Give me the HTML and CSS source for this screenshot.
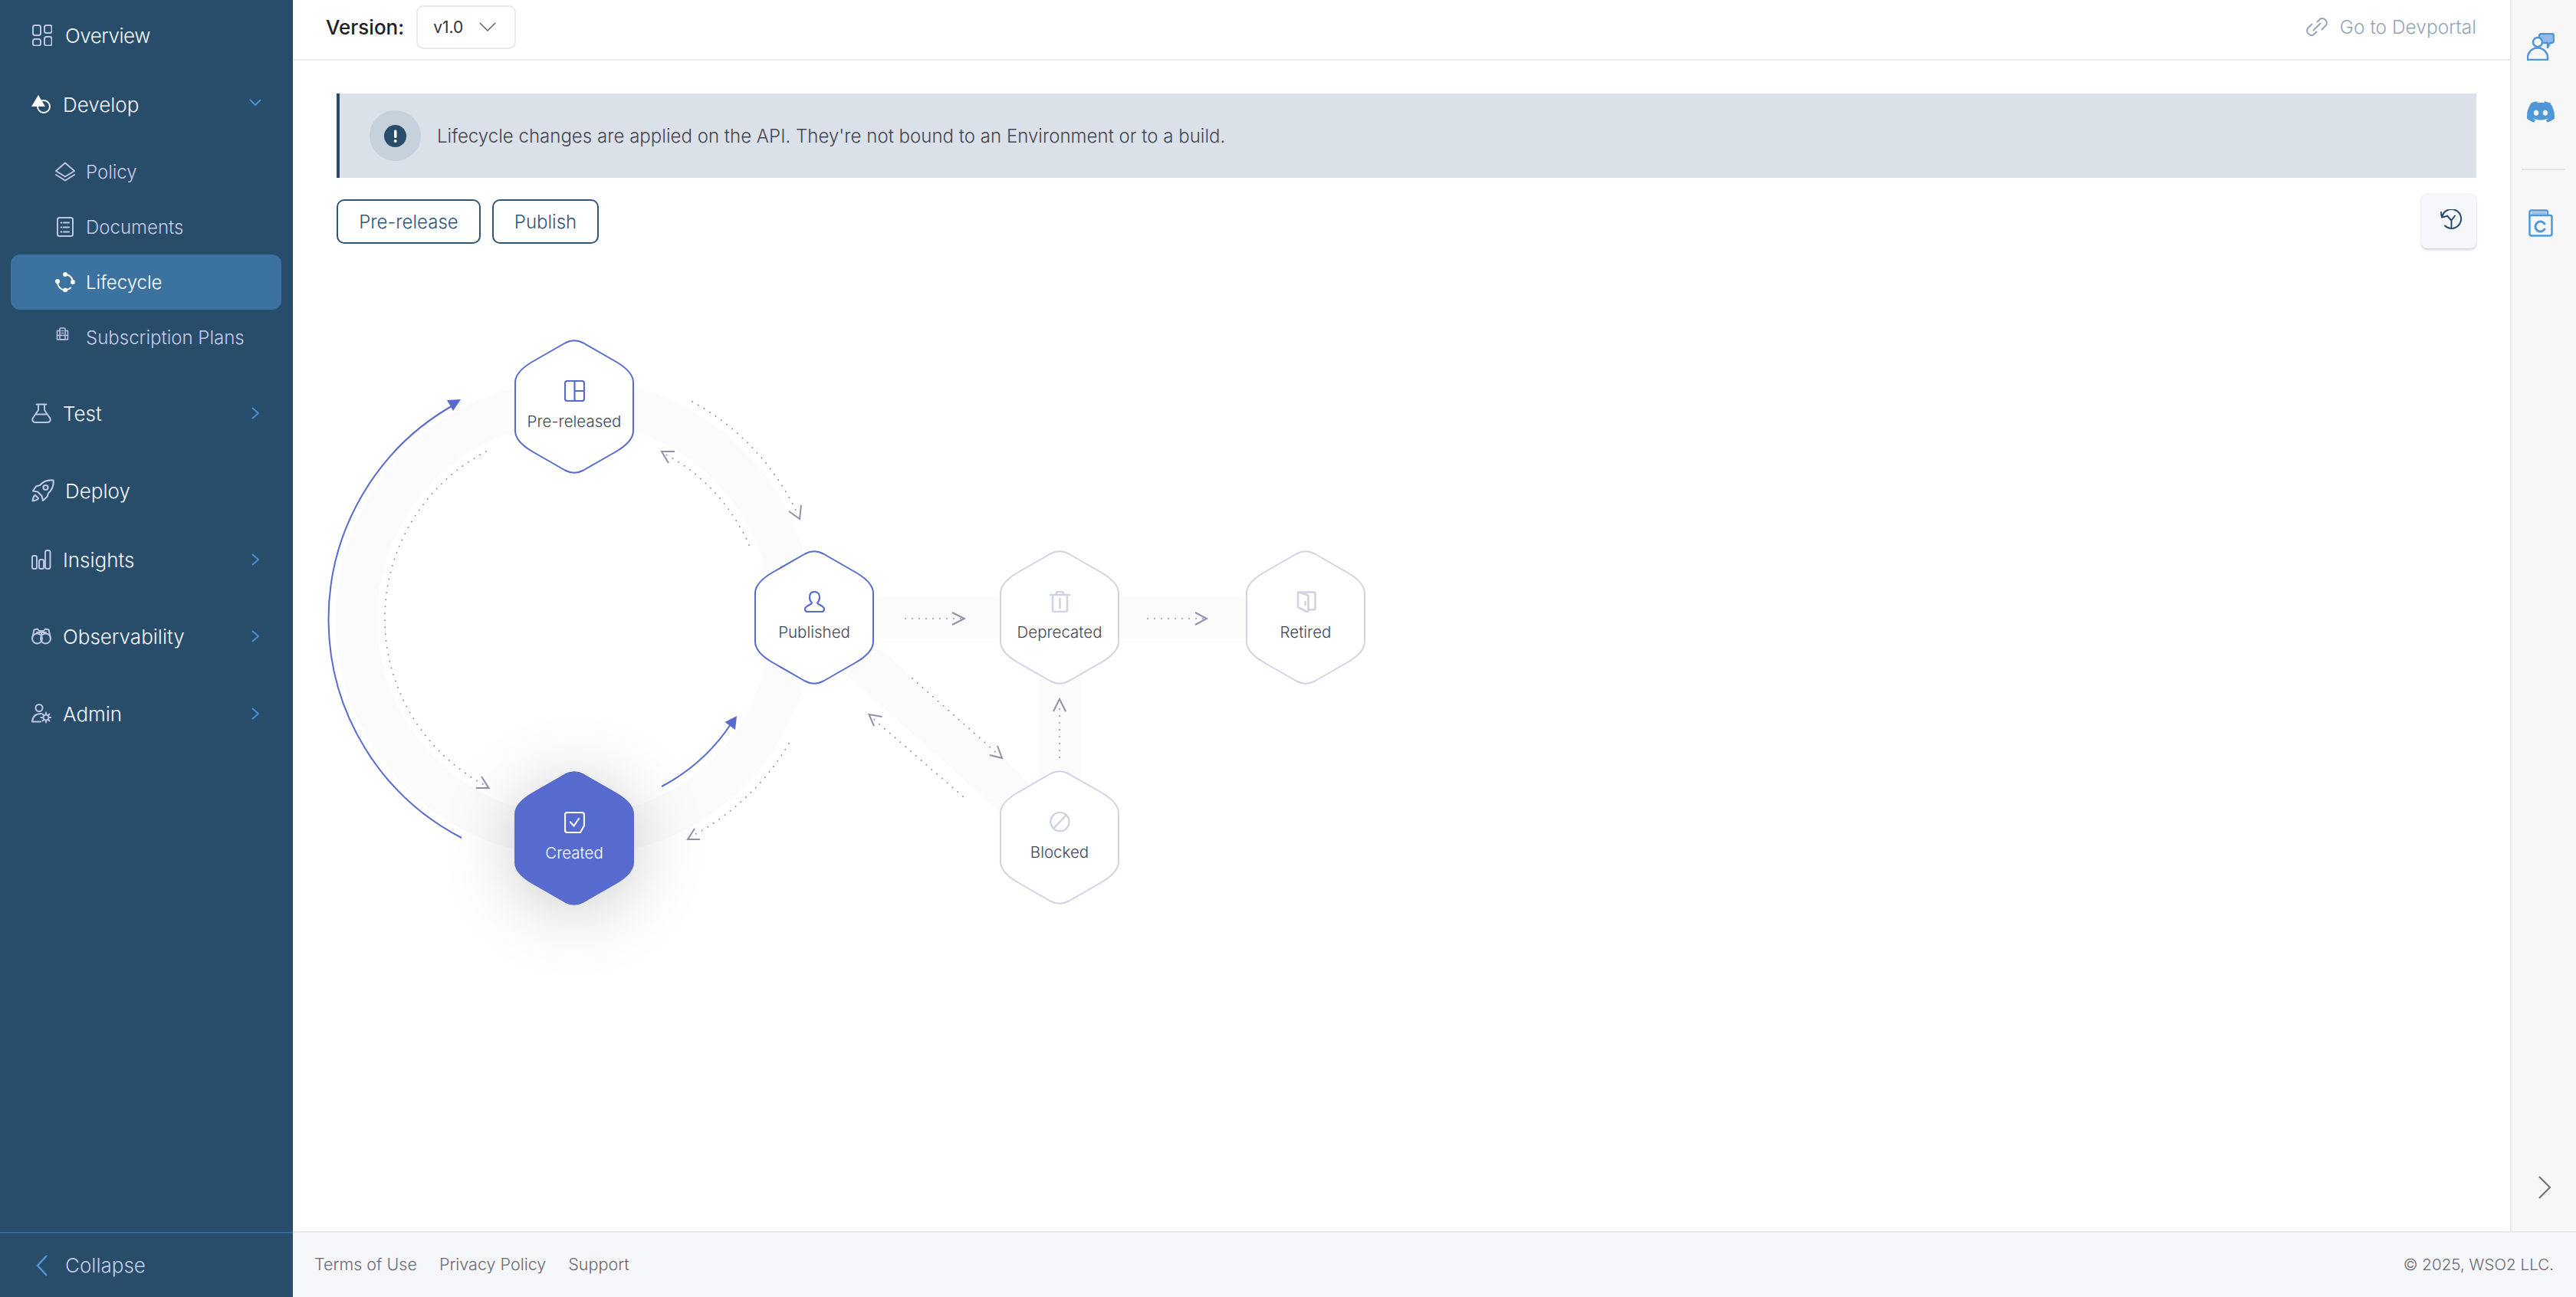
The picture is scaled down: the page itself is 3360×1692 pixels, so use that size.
FILE: index.html
```html
<!DOCTYPE html>
<html lang="en">
<head>
<meta charset="utf-8">
<title>Lifecycle</title>
<link rel="stylesheet" href="styles.css">
</head>
<body>
<svg class="defs" width="0" height="0" aria-hidden="true">
  <symbol id="hex" viewBox="0 0 156 175">
    <path d="M66 4.500Q78 -2 90 4.500L131 28Q155 41.500 155 56V119Q155 133.500 131 147L90 170.500Q78 177 66 170.500L25 147Q1 133.500 1 119V56Q1 41.500 25 28Z"/>
  </symbol>
  <symbol id="chev-right" viewBox="0 0 12 16"><path d="M2 1L10 8L2 15"/></symbol>
</svg>
<div class="page">
  <aside class="sidebar">
    <nav class="nav">
      <a class="item item-first"><svg class="ico ico-overview" viewBox="0 0 26 28"><rect x="1" y="1" width="10" height="13" rx="2.5"/><rect x="16" y="1" width="9.5" height="10" rx="2.5"/><rect x="1" y="19" width="10" height="8.500" rx="2.5"/><rect x="16" y="16" width="9.500" height="11.500" rx="2.5"/></svg><span class="label">Overview</span></a>
      <a class="item gap-18"><svg class="ico ico-main ico-white" viewBox="0 0 26 26"><circle cx="16" cy="16" r="8" /><path class="solid" d="M9 1L18 16H0Z"/></svg><span class="label">Develop</span><svg class="chev chev-down" viewBox="0 0 16 10"><path d="M1 1L8 8L15 1"/></svg></a>
      <a class="item sub gap-16"><svg class="ico ico-sub" viewBox="0 0 26 25"><path d="M13 1L25 11.500L13 19L1 11.500Z"/><path d="M1 16.500L13 24L25 16.500"/></svg><span class="label">Policy</span></a>
      <a class="item sub"><svg class="ico ico-doc" viewBox="0 0 22 26"><rect x="1" y="1" width="20" height="24" rx="2.500"/><path d="M9 7.500H16M9 13.500H16M9 19.500H16M5.500 7.500H6.500M5.500 13.500H6.500M5.500 19.500H6.500"/></svg><span class="label">Documents</span></a>
      <a class="item sub active"><svg class="ico ico-sub ico-white" viewBox="0 0 26 26"><path d="M14 3A10.500 10.500 0 0 1 23 12M12 23.500A10.500 10.500 0 0 1 3 13.500M20 20.500A10.500 10.500 0 0 1 15 23"/><circle class="solid" cx="13" cy="3" r="3"/><circle class="solid" cx="23" cy="13" r="3"/><circle class="solid" cx="13" cy="23.500" r="3"/><circle class="solid" cx="3" cy="12" r="3"/></svg><span class="label">Lifecycle</span></a>
      <a class="item sub"><svg class="ico ico-plan" viewBox="0 0 17 17"><rect x="5" y="1" width="7" height="15" rx="1"/><path d="M5 4.500H1.500V16H15.500V4.500H12M7.500 4.500H9.500M7.500 7.500H9.500M1.500 10.500H15.500"/></svg><span class="label">Subscription Plans</span></a>
      <a class="item gap-27"><svg class="ico ico-main" viewBox="0 0 26 26"><path d="M6.500 1.500H19.500M9 1.500V9L1.800 19.500C0.500 22 2 25 5 25H21C24 25 25.500 22 24.200 19.500L17 9V1.500M5.500 14.500H20.500"/></svg><span class="label">Test</span><svg class="chev"><use href="#chev-right"/></svg></a>
      <a class="item gap-29"><svg class="ico ico-rocket" viewBox="0 0 30 30"><path d="M28.500 1.500C21 0.500 15 3.500 11 8L6 9.500L2 15.500L8 16.500L13.500 22L15 28L20.500 23L22 18.500C27 14 29.500 9 28.500 1.500Z"/><circle cx="18.500" cy="11" r="3"/><path d="M5 21C3 22 2 25 1.500 28.500C5 28 8 27 9 25Z"/></svg><span class="label">Deploy</span></a>
      <a class="item gap-18"><svg class="ico ico-main" viewBox="0 0 26 26"><rect x="1" y="8" width="6" height="17" rx="2"/><rect x="10" y="13" width="6" height="12" rx="2"/><rect x="18" y="1" width="6.500" height="24" rx="2.500"/></svg><span class="label">Insights</span><svg class="chev"><use href="#chev-right"/></svg></a>
      <a class="item gap-28"><svg class="ico ico-main" viewBox="0 0 26 22"><circle cx="7.500" cy="14" r="6.500"/><circle cx="18.500" cy="14" r="6.500"/><path d="M1 14L3.500 2.500L8 1.500L10 4H16L18 1.500L22.500 2.500L25 14M7 6H19M13 6V14"/></svg><span class="label">Observability</span><svg class="chev"><use href="#chev-right"/></svg></a>
      <a class="item gap-29"><svg class="ico ico-main" viewBox="0 0 26 26"><circle cx="10" cy="5.500" r="4.500"/><path d="M1 23.500C1.500 16.500 6 13 13 13M1 23.500H12"/><circle cx="19" cy="18" r="3.500"/><path d="M19 11.500V14M19 22V24.500M12.500 18H15M23 18H25.500M14.500 13.500L16.300 15.300M21.700 20.700L23.500 22.500M14.500 22.500L16.300 20.700M21.700 15.300L23.500 13.500"/></svg><span class="label">Admin</span><svg class="chev"><use href="#chev-right"/></svg></a>
    </nav>
    <div class="collapse"><svg class="collapse-ico" viewBox="0 0 17 28"><path d="M15 1L3 14L15 27"/></svg><span>Collapse</span></div>
  </aside>
  <div class="right">
    <div class="upper">
      <main class="main">
        <header class="topbar">
          <div class="version"><span class="version-label">Version:</span>
            <div class="select"><span>v1.0</span><svg class="select-chev" viewBox="0 0 22 12"><path d="M1 1L11 11L21 1"/></svg></div>
          </div>
          <a class="portal"><svg class="link-ico" viewBox="0 0 30 30"><path d="M15.500 8.500L19.500 4.500A6 6 0 0 1 27 13L21.500 18.500M10.500 19.500L19.500 10.500M14.500 21.500L10.500 25.500A6 6 0 0 1 3 17L8.500 11.500"/></svg><span>Go to Devportal</span></a>
        </header>
        <section class="top-section">
          <div class="alert">
            <span class="alert-ring"><svg class="alert-ico" viewBox="0 0 29 29"><circle cx="14.500" cy="14.500" r="14.500"/><rect class="bang" x="13" y="6.500" width="3.500" height="10.500" rx="1.500"/><circle class="bang" cx="14.700" cy="21" r="2"/></svg></span>
            <p>Lifecycle changes are applied on the API. They're not bound to an Environment or to a build.</p>
          </div>
          <div class="toolbar">
            <button class="btn btn-pre">Pre-release</button>
            <button class="btn btn-pub">Publish</button>
            <button class="history"><svg class="history-ico" viewBox="0 0 30 28"><path d="M3.500 9.500A12.500 12.500 0 1 1 7 21.500M2 4L3 10.500L9.500 9M15.500 14.500V23M15.500 14.500L10 8.500M15.500 14.500L20 8.500"/></svg></button>
          </div>
        </section>
        <section class="diagram">
          <svg class="edges" viewBox="400 420 1400 800">
            <g class="band">
              <circle cx="749" cy="807" r="284"/>
              <path d="M1062 806H1703M1382 806V1092M1062 806L1382 1092"/>
            </g>
            <g class="live">
              <path d="M602 1093A321 321 0 0 1 596 526"/>
              <path d="M863 1026A247 247 0 0 0 955 942"/>
            </g>
            <path class="tip" d="M601 521L583 522L591 536Z"/>
            <path class="tip" d="M961 934L945.500 942L959 952Z"/>
            <g class="dots">
              <path d="M634 589A246 246 0 0 0 632 1024"/>
              <path d="M903 524A322 322 0 0 1 1041 672"/>
              <path d="M977 711A247 247 0 0 0 867 592"/>
              <path d="M1029 970A323 323 0 0 1 902 1091"/>
              <path d="M1181 807H1254"/>
              <path d="M1497 807H1570"/>
              <path d="M1382 988V916"/>
              <path d="M1190 885L1303 985"/>
              <path d="M1256 1039L1137 936"/>
            </g>
            <g class="heads">
              <path d="M628 1013L637.500 1028H621"/>
              <path d="M1029 667L1043 677L1045 659"/>
              <path d="M880 589H863L872 604"/>
              <path d="M913 1095H897L906 1081"/>
              <path d="M1242 799L1258 807L1242 815"/>
              <path d="M1559 799L1574 807L1559 815"/>
              <path d="M1374 928L1382 912L1390 928"/>
              <path d="M1291 985L1307 989L1301 973"/>
              <path d="M1150.500 935L1133.500 932L1140 947"/>
            </g>
          </svg>
          <div class="node node-pre on">
            <svg class="hexagon"><use href="#hex"/></svg>
            <svg class="node-ico" viewBox="0 0 27 28"><rect x="1" y="1" width="25" height="26" rx="3"/><path d="M13.500 1V27M13.500 14H26"/></svg>
            <span class="node-label">Pre-released</span>
          </div>
          <div class="node node-pub on">
            <svg class="hexagon"><use href="#hex"/></svg>
            <svg class="node-ico" viewBox="0 0 27 28"><path d="M13.500 1C8.500 1 7 5 7 8.500C7 12 8.500 14 10 15.500C9.500 18 1 19 1 23.500C1 26 2.500 27 4 27H23C24.500 27 26 26 26 23.500C26 19 17.500 18 17 15.500C18.500 14 20 12 20 8.500C20 5 18.500 1 13.500 1Z"/></svg>
            <span class="node-label">Published</span>
          </div>
          <div class="node node-created active-node">
            <svg class="hexagon"><use href="#hex"/></svg>
            <svg class="node-ico" viewBox="0 0 27 28"><path d="M4 1H23C25 1 26 2 26 4V18L21 27H4C2 27 1 26 1 24V4C1 2 2 1 4 1Z"/><path d="M8 13.500L12.500 18.500L19 9"/></svg>
            <span class="node-label">Created</span>
          </div>
          <div class="node node-dep off">
            <svg class="hexagon"><use href="#hex"/></svg>
            <svg class="node-ico" viewBox="0 0 27 28"><path d="M1 5H26M4 5V25C4 26 5 27 6 27H21C22 27 23 26 23 25V5M9 5V3C9 2 10 1 11 1H16C17 1 18 2 18 3V5M13.500 10V22"/></svg>
            <span class="node-label">Deprecated</span>
          </div>
          <div class="node node-ret off">
            <svg class="hexagon"><use href="#hex"/></svg>
            <svg class="node-ico" viewBox="0 0 27 28"><path d="M3 1.500H24C25 1.500 25.500 2 25.500 3V23C25.500 24 25 24.500 24 24.500H16M3 1.500V21L14 27C15.500 27.500 16.500 27 16.500 26V7C16.500 6 16 5.500 15 5L3 1.500ZM12.500 14V18"/></svg>
            <span class="node-label">Retired</span>
          </div>
          <div class="node node-blk off">
            <svg class="hexagon"><use href="#hex"/></svg>
            <svg class="node-ico" viewBox="0 0 29 29"><circle cx="14.500" cy="14.500" r="13"/><path d="M5.500 24L23.500 5"/></svg>
            <span class="node-label">Blocked</span>
          </div>
        </section>
      </main>
      <aside class="rail">
        <svg class="rail-ico rail-user" viewBox="0 0 36 36"><path class="fill" d="M19 1H32C34 1 35 2 35 4V10C35 12 34 13 32 13H30L27 19V13H19C17 13 16 12 16 10V4C16 2 17 1 19 1Z"/><circle class="cover" cx="14" cy="12" r="6"/><path d="M1 35C0 26 6 19.500 14 19.500C22 19.500 28 26 27 35Z"/></svg>
        <svg class="rail-discord" viewBox="0 3.300 24 17.500"><path d="M20.317 4.3698a19.7913 19.7913 0 00-4.8851-1.5152.0741.0741 0 00-.0785.0371c-.211.3753-.4447.8648-.6083 1.2495-1.8447-.2762-3.68-.2762-5.4868 0-.1636-.3933-.4058-.8742-.6177-1.2495a.077.077 0 00-.0785-.037 19.7363 19.7363 0 00-4.8852 1.515.0699.0699 0 00-.0321.0277C.5334 9.0458-.319 13.5799.0992 18.0578a.0824.0824 0 00.0312.0561c2.0528 1.5076 4.0413 2.4228 5.9929 3.0294a.0777.0777 0 00.0842-.0276c.4616-.6304.8731-1.2952 1.226-1.9942a.076.076 0 00-.0416-.1057c-.6528-.2476-1.2743-.5495-1.8722-.8923a.077.077 0 01-.0076-.1277c.1258-.0943.2517-.1923.3718-.2914a.0743.0743 0 01.0776-.0105c3.9278 1.7933 8.18 1.7933 12.0614 0a.0739.0739 0 01.0785.0095c.1202.099.246.1981.3728.2924a.077.077 0 01-.0066.1276 12.2986 12.2986 0 01-1.873.8914.0766.0766 0 00-.0407.1067c.3604.698.7719 1.3628 1.225 1.9932a.076.076 0 00.0842.0286c1.961-.6067 3.9495-1.5219 6.0023-3.0294a.077.077 0 00.0313-.0552c.5004-5.177-.8382-9.6739-3.5485-13.6604a.061.061 0 00-.0312-.0286zM8.02 15.3312c-1.1825 0-2.1569-1.0857-2.1569-2.419 0-1.3332.9555-2.4189 2.157-2.4189 1.2108 0 2.1757 1.0952 2.1568 2.419 0 1.3332-.9555 2.4189-2.1569 2.4189zm7.9748 0c-1.1825 0-2.1569-1.0857-2.1569-2.419 0-1.3332.9554-2.4189 2.1569-2.4189 1.2108 0 2.1757 1.0952 2.1568 2.419 0 1.3332-.946 2.4189-2.1568 2.4189Z"/></svg>
        <hr class="rail-rule">
        <svg class="rail-ico rail-book" viewBox="0 0 32 36"><path d="M1.500 33V4C1.500 2.500 2.500 1.500 4 1.500H23C24.500 1.500 25 2.500 25 4V8H28.500C30 8 30.500 9 30.500 10V32C30.500 33.500 29.500 34.500 28 34.500H4C2.500 34.500 1.500 33.500 1.500 32ZM1.500 8H25"/><path class="fill fill-flat" d="M4 3.500H23V7H4Z"/><path class="c" d="M21 19A6.500 6.500 0 1 0 21 26"/></svg>
        <svg class="rail-chev" viewBox="0 0 16 30"><path d="M1 1L15 15L1 29"/></svg>
      </aside>
    </div>
    <footer class="footer">
      <div class="footer-links"><a>Terms of Use</a><a>Privacy Policy</a><a>Support</a></div>
      <span class="copyright">© 2025, WSO2 LLC.</span>
    </footer>
  </div>
</div>
</body>
</html>
```

FILE: styles.css
```css
* { box-sizing: border-box; }
html, body { margin: 0; height: 100%; }
body { font-family: "Inter", "Liberation Sans", sans-serif; color: #45454f; background: #fff; overflow: hidden; }
.defs { position: absolute; }
.page { display: flex; height: 1692px; }

/* Sidebar */
.sidebar { width: 382px; flex: none; background: #284d6b; display: flex; flex-direction: column; justify-content: space-between; }
.nav { display: flex; flex-direction: column; padding: 10px 15px 0 14px; }
.item { height: 72px; display: flex; align-items: center; padding-left: 27px; color: #f3f5fb; font-size: 26px; font-weight: 300; border-radius: 12px; }
.item-first .label { letter-spacing: -.5px; }
.gap-16 { margin-top: 16px; }
.gap-18 { margin-top: 18px; }
.gap-27 { margin-top: 27px; }
.gap-28 { margin-top: 28px; }
.gap-29 { margin-top: 29px; }
.sub { padding-left: 58px; color: #c4cbe7; font-size: 24px; }
.active { background: #3c72a0; color: #fff; }
.ico { flex: none; fill: none; stroke: #bcc5e4; stroke-width: 2; stroke-linecap: round; stroke-linejoin: round; }
.ico-overview { width: 26px; height: 28px; margin: 0 17px 0 1px; }
.ico-main { width: 26px; height: 26px; margin-right: 15px; }
.ico-sub { width: 26px; height: 26px; margin-right: 14px; }
.ico-doc { width: 22px; height: 26px; margin: 0 16px 0 2px; }
.ico-plan { width: 17px; height: 17px; margin: -10px 22px 0 1px; stroke-width: 1.500; }
.ico-rocket { width: 30px; height: 30px; margin-right: 14px; stroke-width: 2.200; }
.ico-white { stroke: #fff; }
.ico .solid { fill: #fff; stroke: none; }
.chev { width: 12px; height: 16px; margin-left: auto; margin-right: 28px; fill: none; stroke: #4a90d2; stroke-width: 2; overflow: visible; }
.chev-down { width: 16px; height: 10px; margin-right: 26px; margin-top: -4px; }
.collapse { height: 85px; border-top: 2px solid #356796; display: flex; align-items: center; padding-left: 46px; gap: 22px; color: #c4cbe7; font-size: 26px; font-weight: 300; }
.collapse-ico { width: 17px; height: 28px; fill: none; stroke: #4f97d8; stroke-width: 2.500; }

/* Main */
.right { flex: 1; min-width: 0; display: flex; flex-direction: column; }
.upper { flex: 1; display: flex; min-height: 0; }
.main { flex: 1; min-width: 0; }
.topbar { height: 79px; border-bottom: 2px solid #e8e9ee; display: flex; align-items: center; justify-content: space-between; padding: 0 44px 7px 43px; }
.version { display: flex; align-items: center; gap: 16px; }
.version-label { font-size: 26px; font-weight: 500; color: #222; }
.select { width: 130px; height: 57px; border: 2px solid #e9e9ef; border-radius: 9px; display: flex; align-items: center; padding-left: 20px; font-size: 21px; color: #333; gap: 21px; }
.select-chev { width: 22px; height: 12px; fill: none; stroke: #666; stroke-width: 1.500; }
.portal { display: flex; align-items: center; gap: 15px; font-size: 24.500px; font-weight: 300; color: #94a6b9; }
.link-ico { width: 30px; height: 30px; fill: none; stroke: #94a6b9; stroke-width: 2; stroke-linecap: round; }
.top-section { padding: 43px 44px 0 57px; }
.alert { height: 110px; background: #dae1e8; border-left: 4px solid #284d6b; display: flex; align-items: center; padding-left: 39px; gap: 21px; }
.alert p { margin: 0; font-size: 24px; font-weight: 300; color: #45454f; letter-spacing: .02px; }
.alert-ring { width: 67px; height: 66px; border-radius: 50%; background: #c6d1db; display: flex; align-items: center; justify-content: center; }
.alert-ico { width: 29px; height: 29px; fill: #284d6b; }
.alert-ico .bang { fill: #fff; }
.toolbar { display: flex; align-items: flex-start; gap: 15px; margin-top: 20px; height: 72px; }
.btn { height: 58px; margin-top: 8px; background: #fff; border: 2px solid #2f5676; border-radius: 10px; font: 300 24px "Inter", "Liberation Sans", sans-serif; color: #2f5676; padding: 0; }
.btn-pre { width: 188px; }
.btn-pub { width: 139px; }
.history { margin-left: auto; width: 72px; height: 72px; border: 0; background: #f5f7fb; border-radius: 8px; box-shadow: 0 2px 3px rgba(60, 70, 110, .25); display: flex; align-items: center; justify-content: center; padding: 0 0 2px 5px; }
.history-ico { width: 30px; height: 28px; fill: none; stroke: #284d6b; stroke-width: 2; stroke-linecap: round; stroke-linejoin: round; }

/* Diagram canvas: page coordinates minus (400, 420) */
.diagram { position: relative; width: 1400px; height: 800px; margin: 96px 0 0 18px; }
.edges { position: absolute; inset: 0; width: 1400px; height: 800px; overflow: visible; }
.band { fill: none; stroke: #fbfbfc; stroke-width: 54; }
.live { fill: none; stroke: #566bcd; stroke-width: 2; }
.tip { fill: #566bcd; }
.dots { fill: none; stroke: #8f92a6; stroke-width: 2; stroke-linecap: round; stroke-dasharray: 0 9; }
.heads { fill: none; stroke: #8f92a6; stroke-width: 2; }
.node { position: absolute; width: 156px; height: 175px; display: flex; flex-direction: column; align-items: center; padding-top: 53px; }
.hexagon { position: absolute; inset: 0; width: 156px; height: 175px; overflow: visible; fill: #fff; stroke-width: 2; }
.node-ico { position: relative; width: 27px; height: 28px; fill: none; stroke-width: 2.200; stroke-linecap: round; stroke-linejoin: round; }
.node-label { position: relative; margin-top: 13px; font-size: 20.500px; font-weight: 300; line-height: 26px; color: #45454f; }
.on .hexagon { stroke: #566bcd; }
.on .node-ico { stroke: #566bcd; }
.off .hexagon { stroke: #d0d3e2; }
.off .node-ico { stroke: #d0d3e2; stroke-width: 2.600; }
.active-node .hexagon { fill: #566bcd; stroke: #566bcd; filter: drop-shadow(0 10px 44px rgba(0, 0, 0, .2)); }
.active-node .node-ico { stroke: #fff; }
.active-node .node-label { color: #fff; }
.node-pre { left: 271px; top: 23px; }
.node-pub { left: 584px; top: 298px; }
.node-created { left: 271px; top: 586px; }
.node-dep { left: 904px; top: 298px; }
.node-ret { left: 1225px; top: 298px; }
.node-blk { left: 904px; top: 585px; }

/* Right rail */
.rail { width: 86px; flex: none; background: #f7f7f8; border-left: 2px solid #e8e9ee; display: flex; flex-direction: column; padding: 43px 0 42px 20px; }
.rail-ico { fill: none; stroke: #4f97d8; stroke-width: 2.500; stroke-linejoin: round; }
.rail-ico .fill { fill: #8fbce8; }
.rail-ico .fill-flat { stroke: none; }
.rail-ico .cover { fill: #f7f7f8; }
.rail-ico .c { stroke-width: 3; stroke-linecap: round; }
.rail-user { width: 36px; height: 36px; }
.rail-discord { width: 36px; height: 28px; fill: #4f97d8; margin-top: 53px; }
.rail-rule { width: 57px; height: 2px; border: 0; background: #e4e5ea; margin: 60px 0 0 -7px; }
.rail-book { width: 32px; height: 36px; margin: 51px 0 0 2px; }
.rail-chev { width: 16px; height: 30px; margin: auto 0 0 15px; fill: none; stroke: #707070; stroke-width: 2; }

/* Footer */
.footer { height: 86px; flex: none; background: #f5f7fb; border-top: 2px solid #e8e9ee; display: flex; align-items: center; justify-content: space-between; padding: 0 29px 2px 28px; font-size: 21.500px; font-weight: 300; color: #6a6a72; }
.footer-links { display: flex; gap: 29px; }
.copyright { font-size: 20.600px; }
```
